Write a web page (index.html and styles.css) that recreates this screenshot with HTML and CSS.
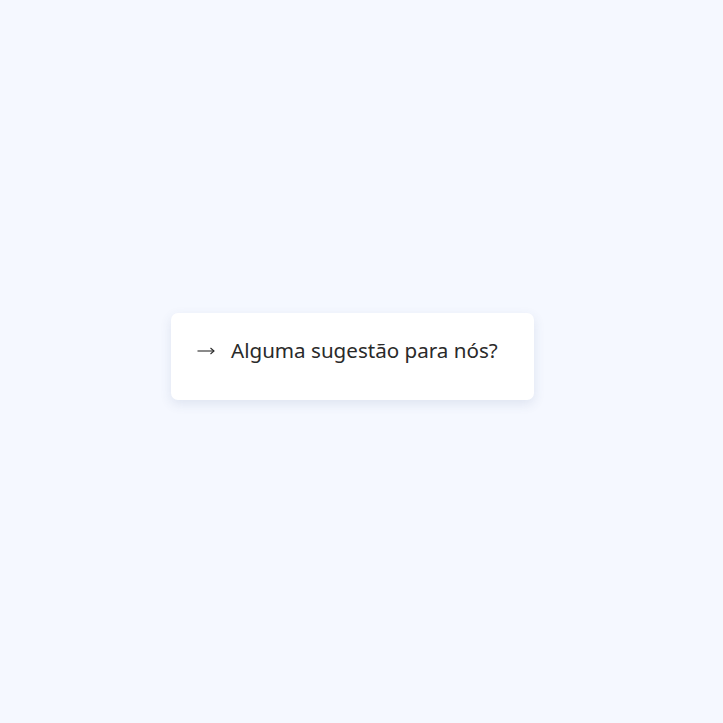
FILE: index.html
```html
<!DOCTYPE html>
<html lang="pt">
<head>
<meta charset="utf-8">
<link rel="stylesheet" href="styles.css">
</head>
<body>
<main class="page">
  <div class="card">
    <svg class="arrow" width="18" height="10" viewBox="0 0 18 10" aria-hidden="true">
      <path d="M0.5 5 H17" fill="none" stroke="#2a2a2a" stroke-width="1.1"/>
      <path d="M13.5 2 L17 5 L13.5 8" fill="none" stroke="#2a2a2a" stroke-width="1.1"/>
    </svg>
    <span class="label">Alguma sugestão para nós?</span>
  </div>
</main>
</body>
</html>
```
FILE: styles.css
```css
html, body {
  margin: 0;
  padding: 0;
  height: 100%;
  background: #f5f8ff;
}
.page {
  height: 713px;
  padding-right: 18px;
  display: flex;
  align-items: center;
  justify-content: center;
  font-family: "Noto Sans", "Open Sans", sans-serif;
}
.card {
  width: 363px;
  height: 87px;
  box-sizing: border-box;
  background: #ffffff;
  border-radius: 7px;
  box-shadow: 0 4px 12px rgba(60, 80, 130, 0.12);
  display: flex;
  align-items: center;
  padding: 0 24px 14px 26px;
  gap: 16px;
  color: #2a2a2a;
  font-size: 20.6px;
}
.arrow {
  flex: none;
  margin-top: 2px;
}
```
